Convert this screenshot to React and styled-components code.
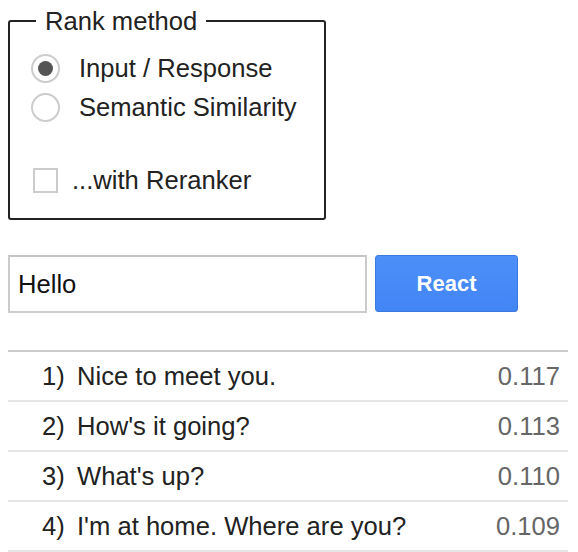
import React, { useState } from 'react';
import styled, { createGlobalStyle } from 'styled-components';

const GlobalStyle = createGlobalStyle`
    body {
        margin: 8px;
        background: #fff;
        font-family: "Liberation Sans", Arial, sans-serif;
        color: #222;
    }
`;

const results = [
    { text: 'Nice to meet you.', score: '0.117' },
    { text: "How's it going?", score: '0.113' },
    { text: "What's up?", score: '0.110' },
    { text: "I'm at home. Where are you?", score: '0.109' },
];

export default function App() {
    const [method, setMethod] = useState('io');
    const [rerank, setRerank] = useState(false);
    const [query, setQuery] = useState('Hello');

    return (
        <Page>
            <GlobalStyle />
            <Fieldset>
                <Legend>Rank method</Legend>
                <Option>
                    <Radio type="radio" name="m" checked={method === 'io'} onChange={() => setMethod('io')} />
                    Input / Response
                </Option>
                <Option>
                    <Radio type="radio" name="m" checked={method === 'sem'} onChange={() => setMethod('sem')} />
                    Semantic Similarity
                </Option>
                <CheckOption>
                    <Check type="checkbox" checked={rerank} onChange={() => setRerank(!rerank)} />
                    ...with Reranker
                </CheckOption>
            </Fieldset>

            <QueryRow>
                <Input value={query} onChange={(e) => setQuery(e.target.value)} />
                <Button>React</Button>
            </QueryRow>

            <Results>
                {results.map((r, i) => (
                    <Row key={i}>
                        <Num>{i + 1})</Num>
                        <Text>{r.text}</Text>
                        <Score>{r.score}</Score>
                    </Row>
                ))}
            </Results>
        </Page>
    );
}

const Page = styled.div`
    width: 560px;
`;

const Fieldset = styled.fieldset`
    box-sizing: border-box;
    width: 318px;
    margin: 0;
    padding: 15px 20px 18px 21px;
    border: 2px solid #222;
    border-radius: 3px;
`;

const Legend = styled.legend`
    font-size: 25.6px;
    padding: 0 9px;
    margin-left: 5px;
    line-height: 26px;
`;

const Option = styled.label`
    display: flex;
    align-items: center;
    gap: 19px;
    height: 39px;
    font-size: 25.6px;
`;

const CheckOption = styled(Option)`
    margin-top: 34px;
    gap: 14px;
    padding-left: 2px;
`;

const Radio = styled.input`
    appearance: none;
    box-sizing: border-box;
    width: 29px;
    height: 29px;
    margin: 0;
    border: 2px solid #ccc;
    border-radius: 50%;
    background: #fff;
    display: grid;
    place-items: center;

    &:checked::after {
        content: '';
        width: 15px;
        height: 15px;
        border-radius: 50%;
        background: #555;
    }
`;

const Check = styled.input`
    appearance: none;
    box-sizing: border-box;
    width: 25px;
    height: 25px;
    margin: 0;
    border: 2px solid #ccc;
    background: #fff;
`;

const QueryRow = styled.div`
    display: flex;
    align-items: flex-start;
    gap: 8px;
    margin-top: 35px;
`;

const Input = styled.input`
    box-sizing: border-box;
    width: 359px;
    height: 58px;
    border: 2px solid #ccc;
    border-top-color: #c4c4c4;
    padding: 0 8px;
    font-family: "Liberation Sans", Arial, sans-serif;
    font-size: 25.6px;
    color: #111;
    outline: none;
`;

const Button = styled.button`
    box-sizing: border-box;
    width: 143px;
    height: 57px;
    border: 1px solid #3b78e0;
    border-radius: 3px;
    background: linear-gradient(#4d8ff9, #4285f4);
    color: #fff;
    font-family: "Liberation Sans", Arial, sans-serif;
    font-weight: bold;
    font-size: 22px;
`;

const Results = styled.div`
    margin-top: 37px;
    border-top: 2px solid #ccc;
`;

const Row = styled.div`
    display: flex;
    align-items: center;
    height: 48px;
    border-bottom: 2px solid #e6e6e6;
    font-size: 25.6px;
    padding: 0 8px 0 34px;
`;

const Num = styled.span`
    width: 35px;
`;

const Text = styled.span`
    flex: 1;
`;

const Score = styled.span`
    color: #666;
`;
